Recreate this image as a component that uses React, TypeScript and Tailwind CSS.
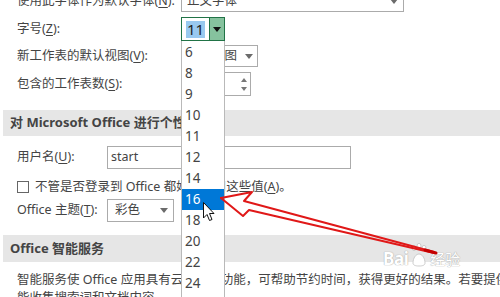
import React from "react"

const FONT = "font-['Noto_Sans','Noto_Sans_CJK_SC',sans-serif]"

function Key({ k }: { k: string }) {
  return (
    <>
      (<span className="underline underline-offset-2">{k}</span>):
    </>
  )
}

function Arrow() {
  return (
    <svg width="8" height="5" viewBox="0 0 8 5" className="shrink-0">
      <path d="M0 0h8L4 5z" fill="#6b6b6b" />
    </svg>
  )
}

const sizes = ["6", "8", "9", "10", "11", "12", "14", "16", "18", "20", "22", "24", "26"]

function SizeList() {
  return (
    <div className="absolute left-[181px] top-[41px] w-[44px] h-[270px] bg-white border-x border-[#b9b9b9] pt-px">
      {sizes.map((s) => (
        <div
          key={s}
          className={
            "h-[21px] pl-[3px] flex items-center text-[13.5px] " +
            (s === "16" ? "bg-[#0078d7] text-white" : "text-[#444]")
          }
        >
          {s}
        </div>
      ))}
    </div>
  )
}

function Overlay() {
  return (
    <svg className="absolute inset-0 pointer-events-none" width="500" height="297" viewBox="0 0 500 297">
      <g fill="none" stroke="#e01818" strokeWidth="2" strokeLinejoin="round" strokeLinecap="round">
        <path d="M221 198 L252 192 L244 201 L434 252" />
        <path d="M221 198 L243 216 L249 210 L434 253" />
      </g>
      <path d="M425 250 L436 253" stroke="#c40000" strokeWidth="3" strokeLinecap="round" />
      <path
        d="M203.5 202.5 V218 L207 214.5 L209.5 220.5 L212 219.5 L209.5 213.5 H214 Z"
        fill="#fff"
        stroke="#111"
        strokeWidth="1"
        strokeLinejoin="round"
      />
    </svg>
  )
}

function Watermark() {
  return (
    <div className="absolute left-[383px] top-[243px] flex items-end gap-[2px] text-white [text-shadow:0_0_1px_#a8a8a8,0_0_1px_#a8a8a8] pointer-events-none">
      <span className="text-[17px] font-bold leading-none tracking-tight">Bai</span>
      <svg width="18" height="24" viewBox="0 0 18 24">
        <g fill="#fff" stroke="#c0c0c0" strokeWidth="0.8">
          <ellipse cx="4" cy="5" rx="2" ry="2.6" />
          <ellipse cx="9" cy="3" rx="2" ry="2.6" />
          <ellipse cx="14" cy="5" rx="2" ry="2.6" />
          <path d="M3 20c0-5 3-9 6-9s6 4 6 9c0 2-2 3-6 3s-6-1-6-3z" />
        </g>
      </svg>
      <span className="text-[15px] leading-none">经验</span>
    </div>
  )
}

export default function App() {
  return (
    <div className={"relative w-[500px] h-[297px] overflow-hidden bg-white text-[#444] text-[12.5px] " + FONT}>
      <div className="flex flex-col -mt-[10px]">
        <div className="flex items-center h-[22px] pl-[17px]">
          <span className="w-[164px] shrink-0 whitespace-nowrap">
            使用此字体作为默认字体<Key k="N" />
          </span>
          <div className="w-[223px] h-[22px] border border-[#ababab] flex items-center justify-between pl-[5px] pr-[5px]">
            <span>正文字体</span>
            <Arrow />
          </div>
        </div>

        <div className="flex items-center h-[24px] mt-[5px] pl-[17px]">
          <span className="w-[164px] shrink-0">
            字号<Key k="Z" />
          </span>
          <div className="w-[44px] h-[24px] border border-[#217346] flex">
            <div className="flex-1 flex items-center pl-[4px]">
              <span className="bg-[#99c9ef] text-[#222] text-[15px] leading-[17px] px-px">11</span>
            </div>
            <div className="w-[15px] bg-[#86c29e] border-l border-[#217346] flex items-center justify-center">
              <svg width="8" height="5" viewBox="0 0 8 5">
                <path d="M0 0h8L4 5z" fill="#111" />
              </svg>
            </div>
          </div>
        </div>

        <div className="flex items-center h-[22px] mt-[4px] pl-[17px]">
          <span className="w-[164px] shrink-0">
            新工作表的默认视图<Key k="V" />
          </span>
          <div className="w-[77px] h-[22px] border border-[#ababab] flex items-center justify-between pl-[5px] pr-[4px]">
            <span>普通视图</span>
            <Arrow />
          </div>
        </div>

        <div className="flex items-center h-[24px] mt-[5px] pl-[17px]">
          <span className="w-[164px] shrink-0">
            包含的工作表数<Key k="S" />
          </span>
          <div className="w-[70px] h-[24px] border border-[#ababab] flex items-center justify-between pl-[5px] pr-[3px]">
            <span>1</span>
            <div className="flex flex-col gap-[5px]">
              <svg width="6" height="4" viewBox="0 0 6 4">
                <path d="M0 4h6L3 0z" fill="#777" />
              </svg>
              <svg width="6" height="4" viewBox="0 0 6 4">
                <path d="M0 0h6L3 4z" fill="#777" />
              </svg>
            </div>
          </div>
        </div>

        <div className="ml-[3px] mt-[14px] h-[26px] bg-[#e6e6e6] flex items-center pl-[7px] font-bold text-[13px] whitespace-nowrap">
          对 Microsoft Office 进行个性化设置
        </div>

        <div className="flex items-center h-[23px] mt-[10px] pl-[17px]">
          <span className="w-[90px] shrink-0">
            用户名<Key k="U" />
          </span>
          <div className="w-[244px] h-[23px] border border-[#ababab] flex items-center pl-[3px]">start</div>
        </div>

        <div className="flex items-center h-[20px] mt-[8px] pl-[17px] whitespace-nowrap">
          <div className="w-[12px] h-[12px] border border-[#666] mr-[6px] shrink-0" />
          <span>
            不管是否登录到 Office 都始终使用这些值(<span className="underline underline-offset-2">A</span>)。
          </span>
        </div>

        <div className="flex items-center h-[23px] mt-[2px] pl-[17px]">
          <span className="w-[90px] shrink-0 whitespace-nowrap">
            Office 主题(<span className="underline underline-offset-2">T</span>):
          </span>
          <div className="w-[67px] h-[23px] border border-[#ababab] flex items-center justify-between pl-[7px] pr-[5px]">
            <span>彩色</span>
            <Arrow />
          </div>
        </div>

        <div className="ml-[3px] mt-[13px] h-[27px] bg-[#e6e6e6] flex items-center pl-[7px] font-bold text-[13px]">
          Office 智能服务
        </div>

        <div className="mt-[9px] pl-[17px] leading-[18px] whitespace-nowrap">
          <div>智能服务使 Office 应用具有云的强大功能，可帮助节约时间，获得更好的结果。若要提供这些服务，Microsoft 需要</div>
          <div>能收集搜索词和文档内容。</div>
        </div>
      </div>

      <SizeList />
      <Watermark />
      <Overlay />
    </div>
  )
}
